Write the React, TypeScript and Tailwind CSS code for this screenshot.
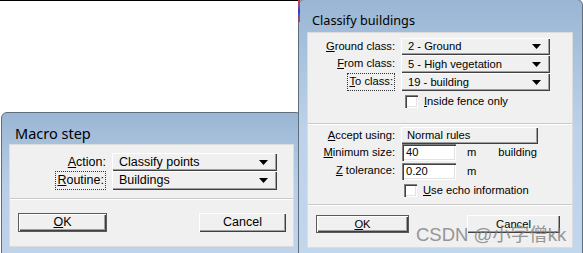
import React from "react";

const sans = "font-['Liberation_Sans',Arial,sans-serif]";
const title = "font-['Noto_Sans',sans-serif]";

const raised =
  "bg-[#f0f0f0] shadow-[inset_1px_1px_#ffffff,inset_-1px_-1px_#404040,inset_-2px_-2px_#a0a0a0]";
const sunken =
  "bg-white shadow-[inset_1px_1px_#808080,inset_2px_2px_#404040,inset_-1px_-1px_#ffffff,inset_-2px_-2px_#e3e3e3]";

function Acc({ text, k }: { text: string; k: number }) {
  return (
    <>
      {text.slice(0, k)}
      <span className="underline underline-offset-[1px]">{text[k]}</span>
      {text.slice(k + 1)}
    </>
  );
}

function Arrow() {
  return (
    <svg width="9" height="5" viewBox="0 0 9 5" className="shrink-0">
      <polygon points="0,0 9,0 4.5,5" fill="#000" />
    </svg>
  );
}

function Combo({ value, className }: { value: string; className: string }) {
  return (
    <div className={`flex items-center justify-between pl-[7px] pr-[9px] ${raised} ${className}`}>
      <span className="whitespace-nowrap">{value}</span>
      <Arrow />
    </div>
  );
}

function Label({ children, focus }: { children: React.ReactNode; focus?: boolean }) {
  return (
    <div className="flex items-center justify-end">
      <span
        className={`whitespace-nowrap leading-none ${
          focus ? "border border-dotted border-[#333] px-[1px] py-[2px]" : ""
        }`}
      >
        {children}
      </span>
    </div>
  );
}

function Button({
  children,
  def,
  className,
}: {
  children: React.ReactNode;
  def?: boolean;
  className: string;
}) {
  return (
    <div
      className={`flex items-center justify-center ${raised} ${
        def ? "border border-[#5a5a5a]" : ""
      } ${className}`}
    >
      {children}
    </div>
  );
}

function Check({ children, className }: { children: React.ReactNode; className: string }) {
  return (
    <div className={`flex items-center gap-[6px] ${className}`}>
      <div className={`h-[13px] w-[13px] ${sunken}`} />
      <span className="whitespace-nowrap">{children}</span>
    </div>
  );
}

function Sep() {
  return <div className="h-[2px] border-t border-b border-t-[#c9c9c9] border-b-white" />;
}

function MacroStep() {
  return (
    <div
      className={`absolute left-[1px] top-[112px] h-[150px] w-[301px] rounded-t-[6px] border border-[#5f6d7c] bg-gradient-to-b from-[#9ab6d4] via-[#b9cfe7] to-[#bfd4ea] px-[7px] ${sans}`}
    >
      <div className={`h-[31px] pl-[6px] pt-[11px] text-[14.5px] leading-[18px] text-black ${title}`}>
        Macro step
      </div>
      <div className="h-[103px] w-[285px] border border-[#dcdcdc] bg-[#f0f0f0] text-[12.5px] text-black">
        <div className="grid grid-cols-[96px_165px] gap-x-[6px] pt-[8px]">
          <Label>
            <Acc text="Action:" k={0} />
          </Label>
          <Combo value="Classify points" className="h-[18px]" />
          <Label focus>
            <Acc text="Routine:" k={0} />
          </Label>
          <Combo value="Buildings" className="h-[19px]" />
        </div>
        <div className="mt-[8px]">
          <Sep />
        </div>
        <div className="mt-[13px] flex justify-between pl-[8px] pr-[7px]">
          <Button def className="h-[19px] w-[89px]">
            <Acc text="OK" k={0} />
          </Button>
          <Button className="h-[19px] w-[87px]">Cancel</Button>
        </div>
      </div>
    </div>
  );
}

function ClassifyBuildings() {
  return (
    <div
      className={`absolute left-[298px] top-[-1px] h-[260px] w-[285px] rounded-t-[6px] border border-[#5f6d7c] bg-gradient-to-b from-[#9ab6d4] via-[#bdd2e9] to-[#c2d6ec] pl-[8px] pr-[9px] ${sans}`}
    >
      <div className={`h-[32px] pl-[5px] pt-[12px] text-[12.7px] leading-[16px] text-black ${title}`}>
        Classify buildings
      </div>
      <div className="h-[216px] w-[266px] border border-[#dcdcdc] bg-[#f0f0f0] text-[11.2px] text-black">
        <div className="grid grid-cols-[87px_149px] gap-x-[6px] pt-[5px]">
          <Label>
            <Acc text="Ground class:" k={0} />
          </Label>
          <Combo value="2 - Ground" className="h-[17px]" />
          <Label>
            <Acc text="From class:" k={0} />
          </Label>
          <Combo value="5 - High vegetation" className="h-[18px]" />
          <Label focus>
            <Acc text="To class:" k={0} />
          </Label>
          <Combo value="19 - building" className="h-[18px]" />
          <div />
          <Check className="ml-[4px] mt-[4px] h-[13px]">
            <Acc text="Inside fence only" k={0} />
          </Check>
        </div>
        <div className="mt-[15px]">
          <Sep />
        </div>
        <div className="grid grid-cols-[87px_auto] gap-x-[6px] pt-[2px]">
          <Label>
            <Acc text="Accept using:" k={0} />
          </Label>
          <div className="flex">
            <div className={`flex h-[17px] w-[137px] items-center pl-[6px] ${raised}`}>Normal rules</div>
          </div>
          <Label>
            <Acc text="Minimum size:" k={0} />
          </Label>
          <div className="flex h-[17px] items-center">
            <div className={`ml-[1px] flex h-[17px] w-[54px] items-center pl-[4px] ${sunken}`}>40</div>
            <span className="ml-[11px]">m</span>
            <span className="ml-[22px]">building</span>
          </div>
          <Label>
            <Acc text="Z tolerance:" k={0} />
          </Label>
          <div className="mt-[2px] flex h-[17px] items-center">
            <div className={`ml-[1px] flex h-[17px] w-[54px] items-center pl-[4px] ${sunken}`}>0.20</div>
            <span className="ml-[11px]">m</span>
          </div>
          <div />
          <Check className="ml-[3px] mt-[4px] h-[13px]">
            <Acc text="Use echo information" k={0} />
          </Check>
        </div>
        <div className="mt-[7px]">
          <Sep />
        </div>
        <div className="mt-[9px] flex justify-between pl-[8px] pr-[12px]">
          <Button def className="h-[18px] w-[93px]">
            <Acc text="OK" k={0} />
          </Button>
          <Button className="h-[18px] w-[93px]">Cancel</Button>
        </div>
      </div>
    </div>
  );
}

export default function App() {
  return (
    <div className="relative h-[253px] w-[583px] overflow-hidden bg-white">
      <div className="absolute left-0 top-0 h-px w-[298px] bg-black" />
      <MacroStep />
      <ClassifyBuildings />
      <div className="absolute left-[298px] top-0 h-[22px] w-[2px] bg-gradient-to-b from-[#e02020] via-[#2434d4] to-[#c83030]" />
      <div className="pointer-events-none absolute left-[416px] top-[224px] whitespace-nowrap text-[18.5px] leading-[22px] text-[#808080] opacity-80 font-['Liberation_Sans','Noto_Sans_CJK_SC',sans-serif]">
        CSDN @小字僧kk
      </div>
    </div>
  );
}
